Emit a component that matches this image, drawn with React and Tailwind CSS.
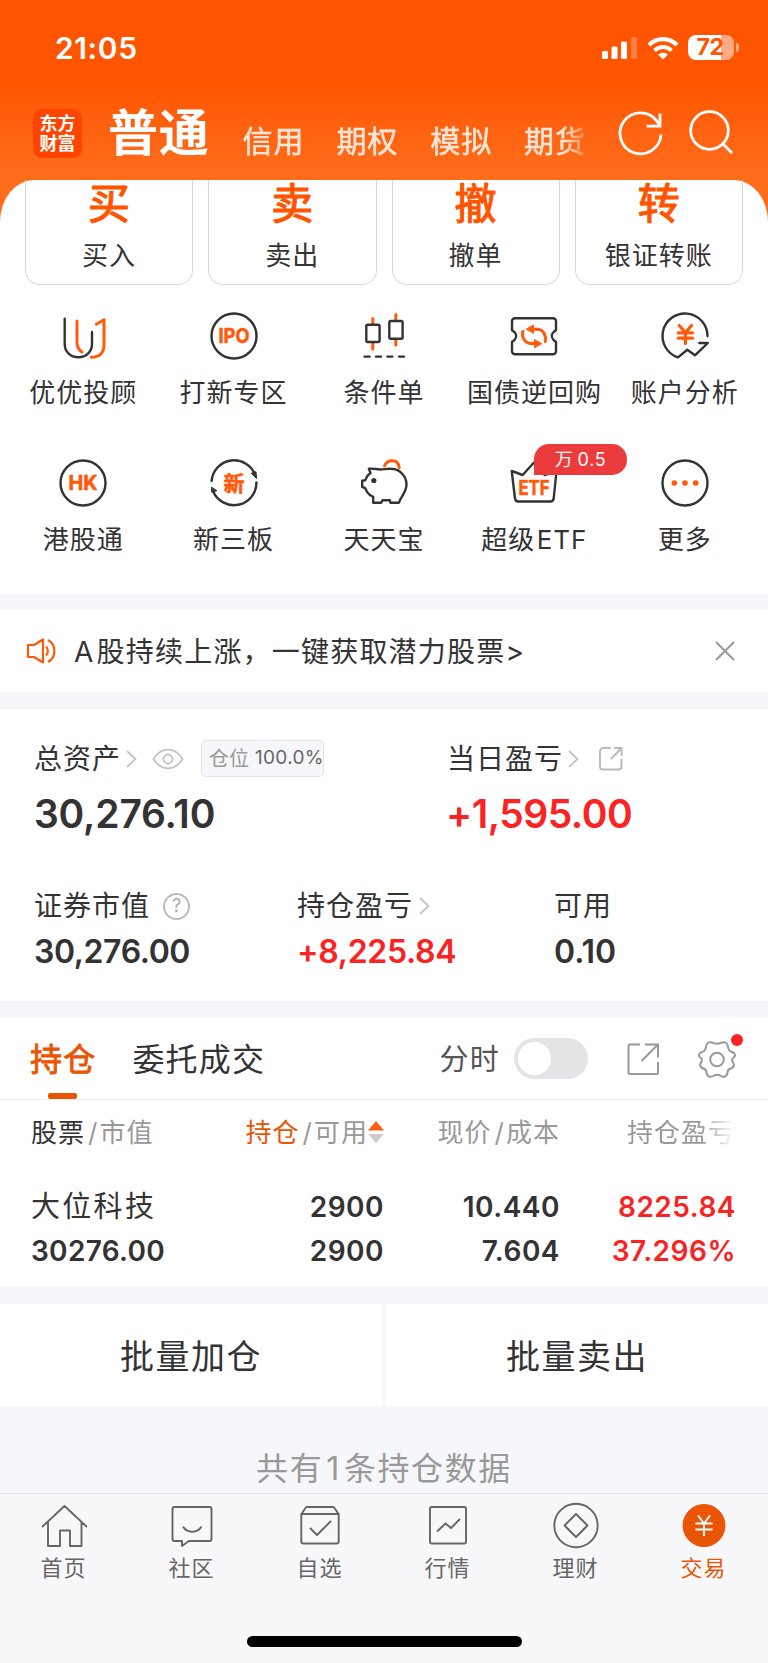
import React, { useState } from 'react';

const DARK = '#333333';
const ORANGE = '#ff5a0a';

const accountTabs = ['信用', '期权', '模拟', '期货'];

const tradeActions = [
  { mark: '买', label: '买入' },
  { mark: '卖', label: '卖出' },
  { mark: '撤', label: '撤单' },
  { mark: '转', label: '银证转账' },
];

function FeatureIcon({ children }) {
  return (
    <svg
      width="56" height="56" viewBox="0 0 56 56" fill="none"
      stroke={DARK} strokeWidth="2.4" strokeLinecap="round" strokeLinejoin="round"
    >
      {children}
    </svg>
  );
}

function IconText({ size, y, width, children }) {
  return (
    <text
      x="28" y={y} fill={ORANGE} stroke={ORANGE} strokeWidth="0.6" textAnchor="middle"
      fontSize={size} textLength={width} lengthAdjust="spacingAndGlyphs" className="font-bold"
    >
      {children}
    </text>
  );
}

const features = [
  {
    label: '优优投顾',
    icon: (
      <FeatureIcon>
        <path d="M9.7 10.7V36c0 8 6 13.3 13.6 13.3S37 44 37 36V24" />
        <path d="M22 13v22c0 4.5 2 7 5 9M41.3 16.3l7.7-4.6V37c0 7.5-4.5 12.3-12.7 12.3" stroke={ORANGE} strokeWidth="3" />
      </FeatureIcon>
    ),
  },
  {
    label: '打新专区',
    icon: (
      <FeatureIcon>
        <circle cx="28" cy="28" r="22.5" />
        <IconText size="20.5" y="35.3" width="31">IPO</IconText>
      </FeatureIcon>
    ),
  },
  {
    label: '条件单',
    icon: (
      <FeatureIcon>
        <path d="M16.8 10.5v5M16.8 35.5V41M39.8 6.5V12M39.8 32v5" stroke={ORANGE} strokeWidth="3" />
        <rect x="10.3" y="16.8" width="13.3" height="17.2" rx="1.5" />
        <rect x="33.3" y="13" width="13.3" height="17.7" rx="1.5" />
        <path d="M8.600 48.600h5M20 48.600h5M31.400 48.600h5M43 48.600h5" />
      </FeatureIcon>
    ),
  },
  {
    label: '国债逆回购',
    icon: (
      <FeatureIcon>
        <path d="M9 10.3h38a3 3 0 0 1 3 3V22l-2.6 2.3a5.5 5.5 0 0 0 0 7.5L50 34v9.300a3 3 0 0 1-3 3H9a3 3 0 0 1-3-3V34l2.600-2.200a5.500 5.500 0 0 0 0-7.500L6 22v-8.700a3 3 0 0 1 3-3z" />
        <path d="M39.300 33.500c1.200-6-2-12.300-8.300-12.300h-5M16.800 23.500c-1.200 6 2 12 8.200 12h5" stroke={ORANGE} strokeWidth="3" />
        <path d="M20.500 21l7-4v8zM35.500 35.500L28.500 31.500v8z" fill={ORANGE} stroke={ORANGE} strokeWidth="1" />
      </FeatureIcon>
    ),
  },
  {
    label: '账户分析',
    icon: (
      <FeatureIcon>
        <path d="M50.500 28A22.500 22.500 0 1 0 21 49.400l9.300-7.600 7.700 5.500L50.800 35h-8.500" />
        <path d="M22.300 17.500l6.100 7.200 6.100-7.200M28.400 25v10.500M21.300 24.800h14.200M21.300 30.200h14.200" stroke={ORANGE} strokeWidth="3.2" />
      </FeatureIcon>
    ),
  },
  {
    label: '港股通',
    icon: (
      <FeatureIcon>
        <circle cx="28" cy="28" r="22.5" />
        <IconText size="20.5" y="35.3" width="29">HK</IconText>
      </FeatureIcon>
    ),
  },
  {
    label: '新三板',
    icon: (
      <FeatureIcon>
        <path d="M5.600 26A22.500 22.500 0 0 1 49.300 20.500M50.400 27.500A22.500 22.500 0 0 1 7 36" />
        <path d="M45.500 18.200l4.500-1.500.5 6.500zM5.500 32.500l.3 5 4.700-1.800z" fill={DARK} strokeWidth="1" />
        <IconText size="21" y="35.6" width="21">新</IconText>
      </FeatureIcon>
    ),
  },
  {
    label: '天天宝',
    icon: (
      <FeatureIcon>
        <path d="M12.800 13.800c4-.8 7.500.8 11.700.7 3.500-.2 6.500-.8 10-.7 4.500 0 7.500 1 10 3.400 3.500 3 6 7.300 6 12.300 0 5.500-2.500 9-5.300 13.300L42.800 47.800h-8.300l-.7-2.600h-7.300l-1.300 2.600h-8v-6c-3-1-4.500-2.300-6-4.600l-2-4-3-1.400v-6l3-.6 2-4 3.300-3.400z" />
        <circle cx="17.8" cy="25.5" r="2.6" fill={DARK} stroke="none" />
        <path d="M28.500 10.800c1.500-3.300 4.500-5 7.700-5 4 0 6.500 2.700 7 6.800" stroke={ORANGE} strokeWidth="3" />
      </FeatureIcon>
    ),
  },
  {
    label: '超级 ETF',
    badge: '万 0.5',
    icon: (
      <FeatureIcon>
        <path d="M5.700 16l11 4L28 7.500 38.700 20l11.800-4-2.800 27.500a3.500 3.500 0 0 1-3.500 3H12.500a3.500 3.500 0 0 1-3.500-3z" />
        <IconText size="20" y="39.5" width="31">ETF</IconText>
      </FeatureIcon>
    ),
  },
  {
    label: '更多',
    icon: (
      <FeatureIcon>
        <circle cx="28" cy="28" r="22.5" />
        <g fill={ORANGE} stroke="none">
          <circle cx="17.3" cy="28" r="2.8" />
          <circle cx="28" cy="28" r="2.8" />
          <circle cx="38.7" cy="28" r="2.8" />
        </g>
      </FeatureIcon>
    ),
  },
];

const navItems = [
  {
    label: '首页',
    icon: <path d="M2 25L24.500 4 47 25M8 20v24h12V28.500h10V44h11.500V20" />,
  },
  {
    label: '社区',
    icon: (
      <>
        <path d="M6.500 5h35a2 2 0 0 1 2 2v30a2 2 0 0 1-2 2H21l-7 5v-5H6.500a2 2 0 0 1-2-2V7a2 2 0 0 1 2-2z" />
        <path d="M15 24.500c4 7 14.500 7 18.500 0" />
      </>
    ),
  },
  {
    label: '自选',
    icon: (
      <>
        <path d="M5.300 12l5-7h27.400l5 7v27.500a2 2 0 0 1-2 2H7.300a2 2 0 0 1-2-2zM5.300 12h37.400" />
        <path d="M14 26l7 7 14-14" />
      </>
    ),
  },
  {
    label: '行情',
    icon: (
      <>
        <rect x="6" y="5" width="36" height="36.5" rx="1.5" />
        <path d="M13 29.500l8.500-8 5.500 4.500 9-9" />
      </>
    ),
  },
  {
    label: '理财',
    icon: (
      <>
        <circle cx="24" cy="23.5" r="21.7" />
        <path d="M24 12l11.500 11.500L24 35 12.500 23.500z" />
      </>
    ),
  },
  {
    label: '交易',
    active: true,
    icon: (
      <>
        <circle cx="24" cy="23.5" r="21" fill="#ea5504" stroke="#ea5504" strokeWidth="1" />
        <path d="M18 13.500l6 8 6-8M24 21.500V34M15.500 21.500h17M15.500 27.500h17" stroke="#fff" strokeWidth="1.9" />
      </>
    ),
  },
];

function Chevron() {
  return (
    <svg width="11" height="18" viewBox="0 0 11 18" fill="none" stroke="#c4c4c4" strokeWidth="1.8">
      <path d="M1 1l8.500 8L1 17" />
    </svg>
  );
}

function Slash() {
  return <span className="mr-[1px] ml-[3px]">/</span>;
}

function StatusBar() {
  return (
    <div className="flex h-[95px] items-center justify-between pl-[55px] pr-[29px]">
      <span className="text-[30px] leading-none font-semibold tracking-[0.6px] text-white">21:05</span>
      <div className="flex items-center">
        <svg width="36" height="24" viewBox="0 0 36 24" fill="#fff">
          <rect x="0" y="15" width="6" height="8" rx="1.5" />
          <rect x="9.5" y="10.5" width="6" height="12.5" rx="1.5" />
          <rect x="19" y="5.5" width="6" height="17.5" rx="1.5" />
          <rect x="29" y="1" width="6" height="22" rx="1.5" opacity="0.25" />
        </svg>
        <svg className="ml-[9px]" width="32" height="24" viewBox="0 0 32 24" fill="none" stroke="#fff" strokeWidth="4.3">
          <path d="M2 9c8-7.800 20-7.800 28 0" />
          <path d="M7.500 14.500c5-4.600 12-4.600 17 0" strokeWidth="3.9" />
          <path d="M16 23.500l-5-5c3-2.500 7-2.500 10 0z" fill="#fff" stroke="none" />
        </svg>
        <div className="ml-[9px] flex h-[25px] w-[46px] items-center justify-center rounded-[8px] bg-linear-to-r from-white from-72% to-[#ffaa80] to-72% pr-[2px] text-[23px] leading-none font-bold tracking-[-0.5px] text-[#ff5500]">
          72
        </div>
        <div className="ml-[2px] h-[9px] w-[3px] rounded-r-full bg-[#ffaa80]" />
      </div>
    </div>
  );
}

function AccountHeader() {
  return (
    <div className="flex h-[85px] pl-[33px]">
      <div className="mt-[14px] flex h-[49px] w-[49px] flex-col items-center justify-center rounded-[9px] bg-[#ff4400] text-[18px] leading-[20px] font-bold text-white">
        <span>东方</span>
        <span>财富</span>
      </div>
      <h1 className="mt-[10px] ml-[26px] text-[50px] leading-[56px] font-bold tracking-[0.8px] text-white">普通</h1>
      <div className="ml-[33px] flex w-[351px] gap-[32px] overflow-hidden pt-[29px] text-[30px] leading-[34px] tracking-[0.9px] text-white/80 [-webkit-text-stroke:0.5px] mask-r-from-91% mask-r-to-100%">
        {accountTabs.map((tab) => <span key={tab} className="shrink-0">{tab}</span>)}
      </div>
      <svg className="mt-[14px] ml-[23px]" width="48" height="48" viewBox="0 0 48 48" fill="none" stroke="#fff" strokeWidth="2.8">
        <path d="M44 25.500A20.500 20.500 0 1 1 39.500 11.500L42.500 16" />
        <path d="M43 4.500v12.700H29.500" />
      </svg>
      <svg className="mt-[14px] ml-[23px]" width="48" height="48" viewBox="0 0 48 48" fill="none" stroke="#fff" strokeWidth="2.8">
        <circle cx="21.5" cy="21.5" r="18.8" />
        <path d="M34.500 34.500L44 44" />
      </svg>
    </div>
  );
}

function Notice() {
  return (
    <div className="mt-[16px] flex h-[82px] items-center bg-white pl-[26px] pr-[33px]">
      <svg width="31" height="28" viewBox="0 0 31 28" fill="none" stroke={ORANGE} strokeWidth="2.2">
        <path d="M2 8h6l9-5.500v23L8 20H2zM17 3v22M20 9.500c2.500 2.500 2.500 6.500 0 9M22 3c8.500 4.500 8.500 17.500 0 22" strokeLinejoin="round" />
      </svg>
      <span className="mt-[2px] ml-[17px] flex-1 text-[28px] leading-none tracking-[1.2px] [word-spacing:-7px]">A 股持续上涨，一键获取潜力股票&gt;</span>
      <svg width="20" height="20" viewBox="0 0 20 20" stroke="#999" strokeWidth="2">
        <path d="M1 1l18 18M19 1L1 19" />
      </svg>
    </div>
  );
}

function Assets() {
  return (
    <div className="mt-[17px] h-[292px] bg-white pl-[34px] pt-[31px]">
      <div className="flex">
        <div className="w-[413px]">
          <div className="flex h-[37px] items-center">
            <span className="text-[28px] leading-none tracking-[1px]">总资产</span>
            <span className="ml-[5px]"><Chevron /></span>
            <svg className="ml-[15px]" width="32" height="24" viewBox="0 0 32 24" fill="none" stroke="#c4c4c4" strokeWidth="1.9">
              <path d="M1.500 12C9-.5 23-.5 30.500 12 23 24.500 9 24.500 1.500 12z" />
              <circle cx="16" cy="12" r="4.5" />
            </svg>
            <div className="ml-[17px] flex h-[37px] w-[123px] items-center rounded-[5px] border border-[#e4e4e8] bg-[#f6f7fa] pl-[7px] text-[19px] whitespace-nowrap">
              <span className="text-[20px] text-[#999999]">仓位</span>
              <span className="ml-[6px] tracking-[0.3px] text-[#666666]">100.0%</span>
            </div>
          </div>
          <div className="mt-[17px] text-[39px] leading-[40px] font-semibold tracking-[-0.2px]">30,276.10</div>
        </div>
        <div>
          <div className="flex h-[37px] items-center">
            <span className="text-[28px] leading-none tracking-[1px]">当日盈亏</span>
            <span className="ml-[5px]"><Chevron /></span>
            <svg className="ml-[19px]" width="26" height="26" viewBox="0 0 26 26" fill="none" stroke="#bbb" strokeWidth="1.9">
              <path d="M13 2H5a3 3 0 0 0-3 3v15.500a3 3 0 0 0 3 3h15.500a3 3 0 0 0 3-3V13M16 2h7.500v8M23.500 2L13 13" />
            </svg>
          </div>
          <div className="mt-[17px] ml-[-1px] text-[39px] leading-[40px] font-semibold tracking-[-0.5px] text-[#fa2323]">+1,595.00</div>
        </div>
      </div>

      <div className="mt-[57px] flex">
        <div className="w-[263px]">
          <div className="flex h-[30px] items-center">
            <span className="text-[28px] leading-none tracking-[1px]">证券市值</span>
            <span className="ml-[13px] flex h-[27px] w-[27px] items-center justify-center rounded-full border-2 border-[#bbbbbb] text-[18px] leading-none text-[#aaaaaa]">?</span>
          </div>
          <div className="mt-[15px] text-[32px] leading-[32px] font-semibold tracking-[-0.4px]">30,276.00</div>
        </div>
        <div className="w-[257px]">
          <div className="flex h-[30px] items-center">
            <span className="text-[28px] leading-none tracking-[1px]">持仓盈亏</span>
            <span className="ml-[6px]"><Chevron /></span>
          </div>
          <div className="mt-[15px] text-[32px] leading-[32px] font-semibold tracking-[-0.3px] text-[#fa2323]">+8,225.84</div>
        </div>
        <div>
          <div className="flex h-[30px] items-center">
            <span className="text-[28px] leading-none tracking-[1px]">可用</span>
          </div>
          <div className="mt-[15px] text-[32px] leading-[32px] font-semibold">0.10</div>
        </div>
      </div>
    </div>
  );
}

function Positions() {
  const [intraday, setIntraday] = useState(false);

  return (
    <div className="mt-[17px] h-[269px] bg-white">
      <div className="flex h-[82px] items-center border-b border-[#eeeeee] pl-[30px] pr-[31px] text-[32px] tracking-[1.2px]">
        <div className="flex h-full flex-col items-center text-[#ea5504]">
          <span className="mt-[21px] leading-[41px] [-webkit-text-stroke:0.9px]">持仓</span>
          <span className="mt-auto mr-[2px] h-[6px] w-[29px] rounded-[2px] bg-[#ea5504]" />
        </div>
        <span className="mt-[2px] ml-[36px]">委托成交</span>
        <span className="mt-[2px] ml-auto text-[29px] text-[#555555]">分时</span>
        <button
          onClick={() => setIntraday(!intraday)}
          className={`ml-[14px] flex h-[41px] w-[74px] items-center rounded-full px-[4px] ${intraday ? 'justify-end bg-[#ea5504]' : 'bg-[#e4e4e6]'}`}
        >
          <span className="h-[33px] w-[33px] rounded-full bg-white" />
        </button>
        <svg className="ml-[38px]" width="34" height="34" viewBox="0 0 34 34" fill="none" stroke="#999" strokeWidth="2">
          <path d="M14 2.500H3.500a1 1 0 0 0-1 1V31a1 1 0 0 0 1 1H31a1 1 0 0 0 1-1V20M19 2.500h13v13M32 2.500L15.500 19" />
        </svg>
        <div className="relative ml-[37px]">
          <svg width="40" height="40" viewBox="0 0 40 40" fill="none" stroke="#999" strokeWidth="2" strokeLinejoin="round">
            <path d="M12.500 3.300c2.500-.8 3.500 1.500 7.500 1.500s5-2.300 7.500-1.500 3 1.500 3.500 4.500c.5 3.500 1.500 4.500 4.500 5.500 2.500.8 2.500 1.500 2.500 3.500-.5 2-3 2-3 4s2 3.500 2 5.500c-.5 2.500-1.500 2.700-4 3.500-2 .8-2.500 2-2.500 4-.5 3-1.500 3.500-3.500 4-2.500.5-3.500-2-7-2s-4.500 2.500-7 2c-2-.5-3-1-3.500-4 0-2-.5-3.200-2.500-4-2.500-.8-3.500-1-4-3.500 0-2 2-3.500 2-5.500s-2.500-2-3-4c0-2 0-2.700 2.500-3.500 3-1 4-2 4.500-5.500.5-3 1-3.700 3.500-4.500z" />
            <circle cx="20" cy="20.5" r="6.8" />
          </svg>
          <span className="absolute -top-[5px] left-[34px] h-[12px] w-[12px] rounded-full bg-[#fa2323]" />
        </div>
      </div>

      <div className="grid h-[66px] grid-cols-[190px_163px_176px_175px] items-center pl-[31px] text-[26px] leading-none tracking-[1px] text-[#999999]">
        <div><span className="text-[#333333]">股票</span><Slash />市值</div>
        <div className="flex items-center justify-end whitespace-nowrap">
          <span className="text-[#ea5504]">持仓</span><Slash />可用
          <svg className="mt-[-2px]" width="16" height="22" viewBox="0 0 16 22">
            <path d="M8 0l8 9.500H0z" fill="#ff5f14" />
            <path d="M8 22l8-9H0z" fill="#ccc" />
          </svg>
        </div>
        <div className="text-right">现价<Slash />成本</div>
        <div className="text-right mask-r-from-80% mask-r-to-100%">持仓盈亏</div>
      </div>

      <div className="mt-[19px] grid grid-cols-[190px_163px_176px_176px] pl-[31px] text-right text-[28px] leading-[44px] font-semibold tracking-[0.5px]">
        <div className="text-left text-[29px] font-normal tracking-[2.3px]">大位科技</div>
        <div>2900</div>
        <div>10.440</div>
        <div className="text-[#fa2323]">8225.84</div>
        <div className="text-left tracking-[0.3px]">30276.00</div>
        <div>2900</div>
        <div>7.604</div>
        <div className="text-[#fa2323]">37.296%</div>
      </div>
    </div>
  );
}

function BottomNav() {
  return (
    <div className="relative h-[170px] border-t border-[#dddddf] bg-[#f8f8fa]">
      <div className="grid grid-cols-6 pt-[8px]">
        {navItems.map((item) => (
          <div key={item.label} className={`flex flex-col items-center ${item.active ? 'text-[#ea5504]' : 'text-[#666666]'}`}>
            <svg width="48" height="48" viewBox="0 0 48 48" fill="none" stroke="#666" strokeWidth="1.9" strokeLinejoin="round">
              {item.icon}
            </svg>
            <span className="mt-[6px] mr-[1px] text-[22px] leading-[24px] tracking-[1px]">{item.label}</span>
          </div>
        ))}
      </div>
      <div className="absolute bottom-[16px] left-[247px] h-[11px] w-[275px] rounded-full bg-black" />
    </div>
  );
}

export default function App() {
  return (
    <div className="flex h-[1663px] w-[768px] flex-col overflow-hidden bg-[#f6f7fa] font-[Inter,'Noto_Sans_CJK_SC',sans-serif] text-[#333333]">
      <div className="bg-linear-to-b from-[#ff5500] from-[80px] to-[#ff6d1a] to-[175px]">
        <StatusBar />
        <AccountHeader />

        <div className="h-[414px] rounded-t-[34px_42px] bg-white">
          <div className="grid grid-cols-4 gap-[15px] px-[25px]">
            {tradeActions.map((action) => (
              <div key={action.label} className="flex h-[105px] flex-col items-center rounded-b-[15px] border border-t-0 border-[#d8d8d8]">
                <span className="mt-[3px] text-[42px] leading-[42px] text-[#ff5500] [-webkit-text-stroke:1.2px]">{action.mark}</span>
                <span className="mt-[17px] text-[26px] leading-[28px] tracking-[1px]">{action.label}</span>
              </div>
            ))}
          </div>

          <div className="mt-[23px] grid grid-cols-5 px-[8px]">
            {features.map((item) => (
              <div key={item.label} className="relative flex h-[147px] flex-col items-center">
                {item.icon}
                <span className="mt-[14px] text-[26px] leading-[30px] tracking-[1px] whitespace-nowrap [word-spacing:-7px]">{item.label}</span>
                {item.badge && (
                  <span className="absolute -top-[11px] left-[75px] flex h-[31px] w-[93px] items-center justify-center rounded-[15px] rounded-bl-none bg-[#ec3b3d] text-[18px] tracking-[0.8px] text-white [word-spacing:-2px]">
                    {item.badge}
                  </span>
                )}
              </div>
            ))}
          </div>
        </div>
      </div>

      <Notice />
      <Assets />
      <Positions />

      <div className="mt-[17px] grid h-[103px] grid-cols-2 gap-[4px] text-[34px] leading-[40px] tracking-[1.5px]">
        <div className="flex items-center justify-center bg-white pt-[2px]">批量加仓</div>
        <div className="flex items-center justify-center bg-white pt-[2px]">批量卖出</div>
      </div>

      <div className="flex-1 pt-[45px] text-center text-[32px] leading-[34px] tracking-[1.6px] text-[#999999]">
        共有<span className="mx-[3px]">1</span>条持仓数据
      </div>

      <BottomNav />
    </div>
  );
}
